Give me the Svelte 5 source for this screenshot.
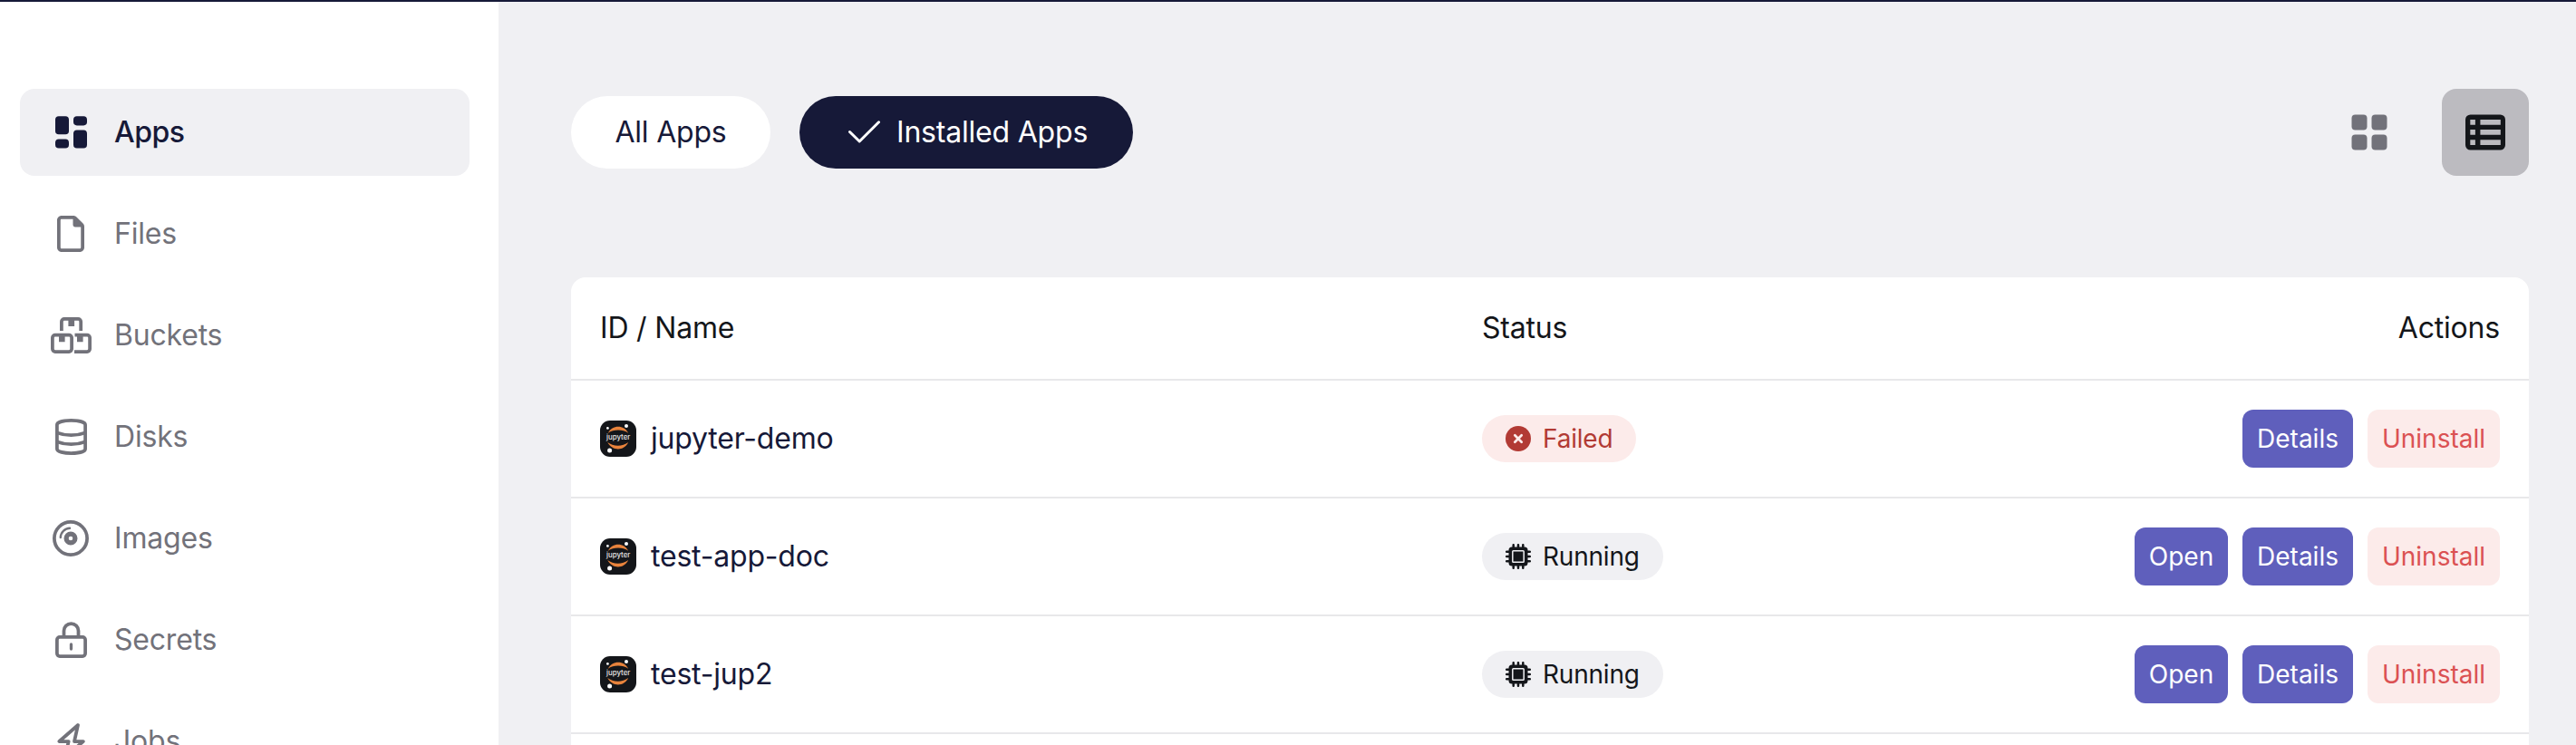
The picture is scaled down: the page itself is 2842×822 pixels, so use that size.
<script>
  const nav = ['Apps', 'Files', 'Buckets', 'Disks', 'Images', 'Secrets', 'Jobs'];
  const rows = [
    { name: 'jupyter-demo', status: 'Failed' },
    { name: 'test-app-doc', status: 'Running' },
    { name: 'test-jup2', status: 'Running' },
    { name: '', status: '' },
  ];
</script>

<div class="page">
  <div class="topbar"></div>
  <div class="body">
    <nav class="sidebar">
      {#each nav as item, i}
        <a class="item" class:active={i === 0} href="#{item}">
          <svg width="50" height="48" viewBox="0 0 50 48" fill="none" stroke="currentColor" stroke-width="3.75" stroke-linecap="round" stroke-linejoin="round">
            {#if item === 'Apps'}
              <g fill="currentColor" stroke="none">
                <rect x="7" y="6.2" width="15" height="20" rx="3.8" />
                <rect x="27" y="6.2" width="15" height="10.2" rx="3.8" />
                <rect x="7" y="31.4" width="15" height="10.2" rx="3.8" />
                <rect x="27" y="21.4" width="15" height="20.2" rx="3.8" />
              </g>
            {:else if item === 'Files'}
              <path fill="currentColor" stroke="none" transform="translate(9 4) scale(.078125)" d="M320 464c8.8 0 16-7.2 16-16V160H256c-17.700 0-32-14.300-32-32V48H64c-8.800 0-16 7.200-16 16V448c0 8.800 7.200 16 16 16H320zM0 64C0 28.700 28.700 0 64 0H229.500c17 0 33.300 6.700 45.300 18.700l90.500 90.500c12 12 18.700 28.300 18.700 45.300V448c0 35.300-28.700 64-64 64H64c-35.300 0-64-28.700-64-64V64z" />
            {:else if item === 'Buckets'}
              <g stroke-linecap="butt">
                <path d="M13.900 19V8.900a3 3 0 0 1 3-3h15.300a3 3 0 0 1 3 3V19" />
                <rect x="3.900" y="23.600" width="21.200" height="18.500" rx="3" />
                <path d="M28.500 23.600h13.600a3 3 0 0 1 3 3v12.500a3 3 0 0 1-3 3H28" />
              </g>
              <path fill="currentColor" stroke="none" d="M21.400 5h6.700v9h-6.700zM11 23h6.600v8.200H11zM31 23h6.600v8.200H31z" />
            {:else if item === 'Disks'}
              <path d="M8.900 10.800C8.900 4.300 40.100 4.300 40.100 10.800V37.200C40.100 43.700 8.900 43.700 8.900 37.200Z" />
              <path d="M9 19.400Q24.500 25 40 19.400M9 29.400Q24.500 35 40 29.400" stroke-linecap="butt" />
            {:else if item === 'Images'}
              <circle cx="24" cy="24" r="18.100" />
              <circle cx="24" cy="24" r="4.900" stroke-width="5.200" />
              <path d="M12.800 23A10.500 10.500 0 0 1 23 12.800" stroke-width="2.400" />
            {:else if item === 'Secrets'}
              <rect x="8.900" y="20.900" width="31.200" height="21.200" rx="3" />
              <path d="M16.500 20V14a8 8 0 0 1 16 0v6" />
              <path d="M24.500 29v5" stroke-width="3.300" />
            {:else}
              <path d="M32 6L11.400 24H21.700L17.500 42L37.800 24H28Z" />
            {/if}
          </svg>
          <span>{item}</span>
        </a>
      {/each}
    </nav>

    <main>
      <div class="toolbar">
        <button class="chip all">All Apps</button>
        <button class="chip installed">
          <svg width="36" height="28" viewBox="0 0 36 28" fill="none" stroke="currentColor" stroke-width="3" stroke-linecap="round" stroke-linejoin="round"><path d="M2.500 13.500L13.200 24L34.500 2.800" /></svg>
          <span>Installed Apps</span>
        </button>
        <div class="views">
          <button class="view" aria-label="Grid">
            <svg width="40" height="40" viewBox="0 0 40 40" fill="currentColor"><rect x=".500" y=".500" width="17" height="17" rx="4" /><rect x="22.500" y=".500" width="17" height="17" rx="4" /><rect x=".500" y="22.500" width="17" height="17" rx="4" /><rect x="22.500" y="22.500" width="17" height="17" rx="4" /></svg>
          </button>
          <button class="view selected" aria-label="List">
            <svg width="44" height="40" viewBox="0 0 44 40"><path fill="currentColor" fill-rule="evenodd" d="M5.500.500h33a5.500 5.500 0 0 1 5.500 5.500v28a5.500 5.500 0 0 1-5.500 5.500h-33A5.500 5.500 0 0 1 0 34V6A5.500 5.500 0 0 1 5.500.500ZM5.300 6.100v5.600h5.600V6.100ZM16.400 6.100v5.600h22.400V6.100ZM5.300 17.100v5.700h5.600v-5.700ZM16.400 17.100v5.700h22.400v-5.700ZM5.300 28.200v5.700h5.600v-5.700ZM16.400 28.200v5.700h22.400v-5.700Z" /></svg>
          </button>
        </div>
      </div>

      <section class="table">
        <div class="row head">
          <div>ID / Name</div>
          <div>Status</div>
          <div class="right">Actions</div>
        </div>
        {#each rows as row}
          <div class="row">
            {#if row.name}
              <div class="name">
                <svg width="40" height="40" viewBox="0 0 40 40">
                  <rect width="40" height="40" rx="11" fill="#14161a" />
                  <path fill="#e8833c" d="M8.800 13.800C13.500 4.300 26.500 4.300 31.200 13.800C25 9.500 15 9.500 8.800 13.800ZM8.300 24C14.500 28.900 25 28.900 31.200 24C26.500 33.900 13.500 33.900 8.300 24Z" />
                  <g fill="#fff"><circle cx="8.400" cy="8.400" r="1.400" /><circle cx="29" cy="6" r="2" /><circle cx="10.600" cy="33.100" r="2.500" /></g>
                  <text x="6.900" y="21.300" fill="#e4e4e4" font-size="7.500" font-weight="500" letter-spacing="0" textLength="26.500" lengthAdjust="spacingAndGlyphs">jupyter</text>
                </svg>
                <span>{row.name}</span>
              </div>
              <div>
                <span class="badge" class:failed={row.status === 'Failed'}>
                  {#if row.status === 'Failed'}
                    <svg width="28" height="28" viewBox="0 0 28 28"><circle cx="14" cy="14" r="14" fill="currentColor" /><path d="M10.300 10.300l7.400 7.400M17.700 10.300l-7.400 7.400" stroke="#fcebea" stroke-width="2.700" stroke-linecap="round" /></svg>
                  {:else}
                    <svg width="28" height="28" viewBox="0 0 28 28" fill="none" stroke="currentColor"><path d="M8.700 1.200v25.600M14 1.200v25.600M19.300 1.200v25.600M1.200 8.700h25.600M1.200 14h25.600M1.200 19.300h25.600" stroke-width="2.500" stroke-linecap="round" /><rect x="3.500" y="3.500" width="21" height="21" rx="3.500" fill="currentColor" stroke="none" /><rect x="7.800" y="7.800" width="12.400" height="12.400" rx=".800" stroke="#f0f0f3" stroke-width="1.500" /></svg>
                  {/if}
                  <span>{row.status}</span>
                </span>
              </div>
              <div class="actions">
                {#if row.status === 'Running'}<button class="btn open">Open</button>{/if}
                <button class="btn details">Details</button>
                <button class="btn uninstall">Uninstall</button>
              </div>
            {/if}
          </div>
        {/each}
      </section>
    </main>
  </div>
</div>

<style>
  .page {
    height: 822px;
    overflow: hidden;
    display: flex;
    flex-direction: column;
    background: #f0f0f3;
    color: #14161a;
    font: 400 32px/48px Inter, sans-serif;
    letter-spacing: -0.2px;
  }
  .topbar { flex: none; height: 2px; background: #161938; }
  .body { flex: 1; display: flex; min-height: 0; }
  .sidebar {
    flex: none;
    width: 550px;
    box-sizing: border-box;
    padding: 96px 32px 0 22px;
    display: flex;
    flex-direction: column;
    gap: 16px;
    background: #fff;
  }
  .item {
    flex: none;
    height: 96px;
    box-sizing: border-box;
    padding-left: 32px;
    display: flex;
    align-items: center;
    gap: 22px;
    border-radius: 16px;
    color: #72727a;
    text-decoration: none;
  }
  .item.active { background: #f0f0f3; color: #161938; font-weight: 550; letter-spacing: -0.5px; }
  svg { display: block; flex: none; }
  main { flex: 1; padding: 96px 52px 0 80px; min-width: 0; }
  .toolbar { display: flex; align-items: center; height: 96px; gap: 32px; }
  button { border: 0; margin: 0; padding: 0; font: inherit; letter-spacing: inherit; cursor: pointer; white-space: nowrap; }
  .chip {
    height: 80px;
    border-radius: 40px;
    display: flex;
    align-items: center;
    justify-content: center;
    gap: 18px;
    color: #161938;
    background: #fff;
  }
  .all { width: 220px; }
  .installed {
    width: 368px;
    justify-content: flex-start;
    padding-left: 53px;
    box-sizing: border-box;
    background: #161938;
    color: #fff;
  }
  .views { display: flex; gap: 32px; margin-left: auto; }
  .view {
    width: 96px;
    height: 96px;
    border-radius: 16px;
    display: grid;
    place-items: center;
    color: #72727a;
    background: transparent;
  }
  .view.selected { background: #bcbbc0; color: #14161a; }
  .table { margin-top: 112px; background: #fff; border-radius: 16px 16px 0 0; }
  .row {
    display: grid;
    grid-template-columns: 973px 1fr 600px;
    align-items: center;
    height: 130px;
    box-sizing: border-box;
    padding: 0 32px;
    border-bottom: 2px solid #e8e8ea;
  }
  .head { height: 114px; }
  .right { text-align: right; }
  .name { display: flex; align-items: center; gap: 16px; color: #161938; }
  .badge {
    display: inline-flex;
    vertical-align: top;
    align-items: center;
    gap: 13px;
    height: 52px;
    padding: 0 26px;
    border-radius: 26px;
    background: #f0f0f3;
    font-size: 28px;
    line-height: 40px;
  }
  .failed { background: #fcebea; color: #b23a34; }
  .actions { display: flex; justify-content: flex-end; gap: 16px; }
  .btn { height: 64px; border-radius: 12px; font-size: 28px; line-height: 40px; letter-spacing: 0; color: #fff; background: #5f5fbc; }
  .open { width: 103px; }
  .details { width: 122px; }
  .uninstall { width: 146px; color: #db5153; background: #fcebea; }
</style>
